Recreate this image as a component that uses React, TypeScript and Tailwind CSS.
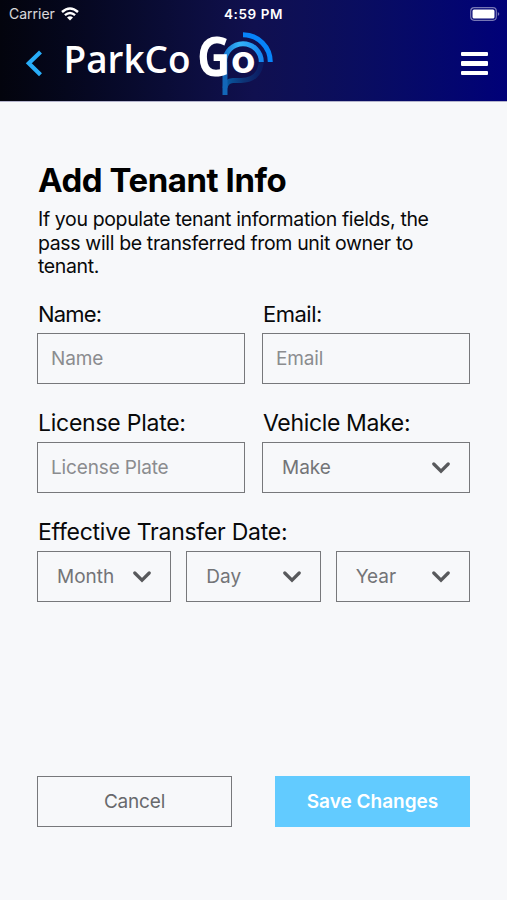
import type { ReactNode } from 'react';

const Logo = () => (
  <svg width="220" height="84" viewBox="60 16 220 84" className="-mt-3 block overflow-visible">
    <defs>
      <linearGradient id="arc" x1="0" y1="0" x2="1" y2="0">
        <stop offset="0" stopColor="#1677d2" />
        <stop offset="0.4" stopColor="#35b4f8" />
        <stop offset="1" stopColor="#1887f0" />
      </linearGradient>
      <linearGradient id="bowl" x1="0" y1="0" x2="1" y2="0">
        <stop offset="0" stopColor="#075da6" />
        <stop offset="0.5" stopColor="#0d3578" />
        <stop offset="1" stopColor="#0c1c62" />
      </linearGradient>
    </defs>
    <g fill="none" strokeWidth="5">
      <path d="M225 88Q226 81 233 80.5H241C252 80.5 260 75 261.3 62" stroke="url(#bowl)" />
      <path d="M225 95V62" stroke="#1266b8" />
      <path d="M224.7 62A18.3 18.3 0 0 1 261.3 62" stroke="url(#arc)" />
      <path d="M243 34.7A27.3 27.3 0 0 1 270.3 62" stroke="#0784fa" />
    </g>
    <g fill="#fff">
      <text
        x="63.5"
        y="72.5"
        fontSize="38"
        fontWeight="600"
        textLength="127"
        lengthAdjust="spacingAndGlyphs"
        fontFamily="'Open Sans', sans-serif"
      >
        ParkCo
      </text>
      <text
        x="197"
        y="75.5"
        fontSize="54"
        fontWeight="700"
        textLength="33.5"
        lengthAdjust="spacingAndGlyphs"
        fontFamily="'Open Sans', sans-serif"
      >
        G
      </text>
      <text
        x="231"
        y="72.8"
        fontSize="39"
        fontWeight="700"
        textLength="24.5"
        lengthAdjust="spacingAndGlyphs"
        fontFamily="Inter, sans-serif"
      >
        o
      </text>
    </g>
  </svg>
);

const StatusBar = () => (
  <div className="flex h-7 items-center justify-between pl-[9px] pr-[7px] text-white">
    <div className="flex w-24 items-center gap-1.5 text-[14px] leading-none text-white/85">
      <span>Carrier</span>
      <svg width="18" height="14" viewBox="0 0 18 14" fill="none" stroke="#fff" strokeWidth="2.4">
        <path d="M1 5Q9-2.2 17 5M3.9 8.2Q9 3.7 14.1 8.2" />
        <path d="M6 10.5Q9 8 12 10.5L9 13.5Z" fill="#fff" stroke="none" />
      </svg>
    </div>
    <span className="mr-0.5 text-[13.5px] font-semibold tracking-[0.6px]">4:59 PM</span>
    <div className="flex w-24 justify-end">
      <svg width="30" height="14" viewBox="0 0 30 14">
        <rect x="0.7" y="0.7" width="25.6" height="12.6" rx="3.5" fill="none" stroke="#7777b5" strokeWidth="1.2" />
        <rect x="2.5" y="2.5" width="22" height="9" rx="1.5" fill="#fff" />
        <path d="M27.8 5Q30.8 7 27.8 9Z" fill="#7777b5" />
      </svg>
    </div>
  </div>
);

const Header = () => (
  <header className="h-[102px] border-b border-[#b4b4cc] bg-linear-to-r from-[#03040d] via-[#10104f] to-[#000078]">
    <StatusBar />
    <div className="flex items-start pl-[25px] pr-[19px]">
      <button aria-label="Back" className="mt-[22px] w-[35px]">
        <svg width="18" height="27" viewBox="0 0 18 27" fill="none" stroke="#28adf8" strokeWidth="4.2">
          <path d="M15.5 2L3.8 13.3L15.5 24.7" />
        </svg>
      </button>
      <Logo />
      <button aria-label="Menu" className="ml-auto mt-6 flex w-[27px] flex-col gap-[5px]">
        <span className="h-[4.4px] rounded-[1px] bg-white" />
        <span className="h-[4.4px] rounded-[1px] bg-white" />
        <span className="h-[4.4px] rounded-[1px] bg-white" />
      </button>
    </div>
  </header>
);

interface FieldProps {
  label: string;
  spacing: string;
  children: ReactNode;
}

const Field = ({ label, spacing, children }: FieldProps) => (
  <div>
    <div className={`h-[31px] whitespace-nowrap pl-px leading-[25px] ${spacing}`}>{label}</div>
    {children}
  </div>
);

const Input = ({ placeholder }: { placeholder: string }) => (
  <input
    placeholder={placeholder}
    className="block h-[51px] w-full border border-[#77787b] px-[13px] pt-px text-[19px] tracking-[-0.15px] placeholder:text-[#8b8c8f]"
  />
);

const Select = ({ text }: { text: string }) => (
  <button className="flex h-[51px] w-full items-center justify-between border border-[#77787b] pl-[19px] pr-[19px] pt-0.5 text-[19px] text-[#737477]">
    {text}
    <svg width="18" height="12" viewBox="0 0 18 12" fill="none" stroke="#58595c" strokeWidth="3.2">
      <path d="M1.8 2L9 9.2L16.2 2" strokeLinecap="round" />
    </svg>
  </button>
);

const App = () => (
  <div className="flex min-h-screen w-full flex-col bg-[#f7f8fa] font-['Inter',sans-serif] text-[#08090a]">
    <Header />
    <main className="px-[37px] pt-[57px]">
      <h1 className="pl-px text-[33px] font-bold leading-[42px] tracking-[-0.45px] text-black">Add Tenant Info</h1>
      <p className="mt-[7px] whitespace-nowrap pl-px text-[19.5px] leading-[23.6px] tracking-[-0.36px]">
        If you populate tenant information fields, the
        <br />
        pass will be transferred from unit owner to
        <br />
        tenant.
      </p>

      <div className="mt-[23px] grid grid-cols-2 gap-x-[17px] gap-y-[27px]">
        <Field label="Name:" spacing="text-[22px] tracking-[-0.8px]">
          <Input placeholder="Name" />
        </Field>
        <Field label="Email:" spacing="text-[22px] tracking-[-0.5px]">
          <Input placeholder="Email" />
        </Field>
        <Field label="License Plate:" spacing="text-[23px] tracking-[-0.25px]">
          <Input placeholder="License Plate" />
        </Field>
        <Field label="Vehicle Make:" spacing="text-[23px] tracking-[-0.35px]">
          <Select text="Make" />
        </Field>
      </div>

      <div className="mt-[27px]">
        <Field label="Effective Transfer Date:" spacing="text-[23px] tracking-[-0.25px]">
          <div className="grid grid-cols-3 gap-[15px]">
            <Select text="Month" />
            <Select text="Day" />
            <Select text="Year" />
          </div>
        </Field>
      </div>

      <div className="mt-[174px] flex justify-between text-[19px]">
        <button className="h-[51px] w-[195px] border border-[#77787b] pt-0.5 tracking-[-0.2px] text-[#68696c]">
          Cancel
        </button>
        <button className="h-[51px] w-[195px] bg-[#62cbff] pt-0.5 font-semibold text-white">Save Changes</button>
      </div>
    </main>
  </div>
);

export default App;
